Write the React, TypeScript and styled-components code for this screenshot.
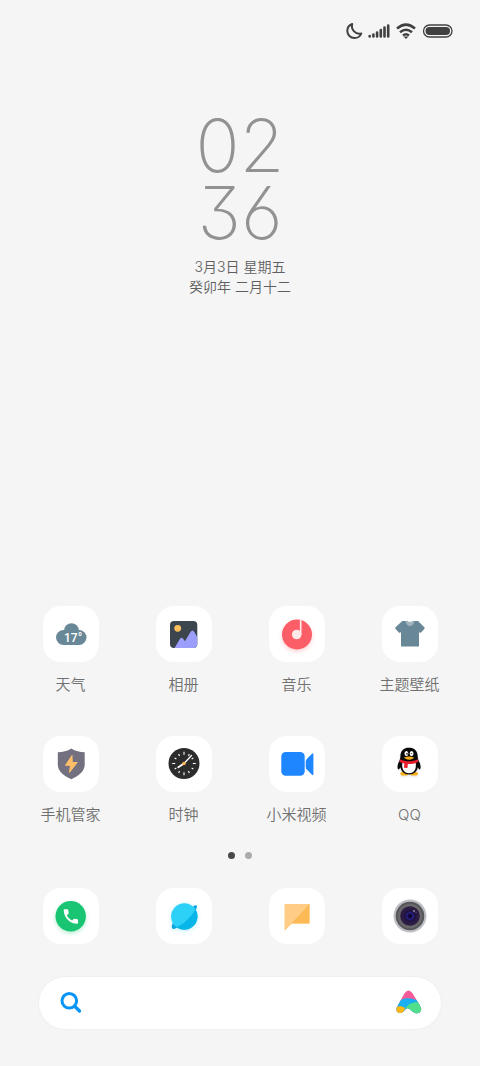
import React from 'react';
import styled, { createGlobalStyle } from 'styled-components';

const GlobalStyle = createGlobalStyle`
  * { box-sizing: border-box; }
  body {
    margin: 0;
    background: #f5f5f5;
    color: #707070;
    font-family: Inter, "Noto Sans CJK SC", sans-serif;
  }
  svg { display: block; }
`;

const Screen = styled.main`
  min-height: 100vh;
  display: flex;
  flex-direction: column;
  background: #f5f5f5;
`;

const StatusBar = styled.header`
  display: flex;
  justify-content: flex-end;
  align-items: center;
  height: 62px;
  gap: 5px;
  padding-right: 27px;
`;

const ClockWidget = styled.section`
  display: flex;
  flex-direction: column;
  align-items: center;
  padding-top: 50px;
`;

const Digits = styled.time`
  font-size: 73px;
  line-height: 67px;
  font-weight: 250;
  color: #929292;
  font-feature-settings: "cv09", "cv03";
  text-align: center;
`;

const DigitRow = styled.span`
  display: block;
`;

const DateLines = styled.p`
  margin: 11px 0 0;
  font-size: 14px;
  line-height: 20px;
  font-weight: 350;
  text-align: center;
  color: #606060;
`;

const DateLine = styled.span`
  display: block;
`;

const AppGrid = styled.nav`
  display: grid;
  grid-template-columns: repeat(4, 1fr);
  row-gap: 40px;
  margin-top: auto;
  padding: 0 14px;
`;

const AppButton = styled.button`
  display: flex;
  flex-direction: column;
  align-items: center;
  gap: 12px;
  padding: 0;
  border: 0;
  background: none;
  color: #707070;
  font: inherit;
  font-size: 15px;
  line-height: 22px;
  font-weight: 350;
  cursor: pointer;
`;

const Tile = styled.span`
  display: grid;
  place-items: center;
  width: 56px;
  height: 56px;
  border-radius: 18px;
  background: #fff;
`;

const Pager = styled.div`
  display: flex;
  justify-content: center;
  gap: 10px;
  margin: 26px 0 29px;
`;

const Dot = styled.span<{ $active?: boolean }>`
  width: 7px;
  height: 7px;
  border-radius: 50%;
  background: ${(p) => (p.$active ? '#484848' : '#ababab')};
`;

const Dock = styled.nav`
  display: grid;
  grid-template-columns: repeat(4, 1fr);
  padding: 0 14px;
`;

const SearchBar = styled.form`
  display: flex;
  align-items: center;
  height: 52px;
  margin: 33px 39px 37px;
  padding: 0 18px 0 21px;
  border-radius: 26px;
  background: #fff;
  box-shadow: 0 0 2px rgba(0, 0, 0, 0.08);
`;

const SearchInput = styled.input`
  flex: 1;
  min-width: 0;
  margin: 0 12px;
  border: 0;
  outline: 0;
  background: none;
  font: inherit;
  font-size: 15px;
`;

const IconButton = styled.button`
  padding: 0;
  border: 0;
  background: none;
  cursor: pointer;
`;

const Icon = ({ children }: { children: React.ReactNode }) => (
  <svg width="56" height="56" viewBox="0 0 56 56" aria-hidden="true">{children}</svg>
);

const Weather = () => (
  <Icon>
    <g fill="#688797">
      <circle cx="28.500" cy="24.500" r="7.300" />
      <rect x="13" y="24" width="30.500" height="15" rx="7.500" />
    </g>
    <text x="21" y="36" fontSize="12" fontWeight="500" fill="#fff" fontFamily="Roboto, sans-serif">17°</text>
  </Icon>
);

const Gallery = () => (
  <Icon>
    <clipPath id="photo"><rect x="14" y="15" width="27.300" height="27" rx="4" /></clipPath>
    <g clipPath="url(#photo)">
      <rect x="14" y="15" width="28" height="28" fill="#3c444d" />
      <circle cx="21.700" cy="22.300" r="3.400" fill="#ffbf5c" />
      <path d="M18 43L23.700 33.300Q25.500 30.500 27.300 33L29 35.300L34.300 26.300Q36.500 22.800 38.500 26.300L42 32.500V43z" fill="#9b9ffb" />
    </g>
  </Icon>
);

const Music = () => (
  <Icon>
    <circle cx="28" cy="28.500" r="15" fill="#fb5e66" filter="drop-shadow(0 2px 2px rgba(251,94,102,.3))" />
    <circle cx="27.700" cy="28.500" r="4.800" fill="#ffe9e8" />
    <path d="M31.700 13.500v15" stroke="#ffe9e8" strokeWidth="1.700" />
  </Icon>
);

const Themes = () => (
  <Icon>
    <path d="M20.500 15h4q3.500 2 7 0h4.500l6.300 6.300q.8.900 0 1.800l-3.200 3.300q-.7.700-1.600.2L37 26v14.500H19V26l-.6.600q-.9.500-1.600-.2l-3.200-3.300q-.8-.9 0-1.800L20 15.300z" fill="#688797" />
    <path d="M23.500 15c1 6.700 8 6.700 9 0q-4.500 2.200-9 0z" fill="#a2b5bf" />
  </Icon>
);

const Security = () => (
  <Icon>
    <path d="M28.300 12.500c4 2.900 8.500 3.300 13.400 3.800v12.500c0 7-7 11.700-13.400 14.500-6.500-2.800-13.500-7.500-13.500-14.500V16.300c5-.5 9.500-.9 13.500-3.800z" fill="#73717f" />
    <path d="M29 19.500l-6.500 9.800h5l-1 7 7.700-9.800h-5z" fill="#ffbf69" stroke="#ffbf69" strokeWidth="1" strokeLinejoin="round" />
  </Icon>
);

const ClockIcon = () => (
  <Icon>
    <circle cx="28" cy="27.500" r="15.500" fill="#2c2c2c" />
    {Array.from({ length: 12 }, (_, i) => (
      <path key={i} d={i % 3 ? 'M28 16.700v2' : 'M28 15.700v3'} stroke="#fff" strokeWidth="1.100" transform={`rotate(${i * 30} 28 27.500)`} />
    ))}
    <path d="M22.300 31.200l5.700-3.700" stroke="#fff" strokeWidth="1.900" strokeLinecap="round" />
    <path d="M28 27.500l7.500-8" stroke="#fff" strokeWidth="1.300" strokeLinecap="round" />
    <circle cx="28" cy="27.500" r="1.700" fill="#ffb54f" />
  </Icon>
);

const Video = () => (
  <Icon>
    <rect x="12.300" y="16" width="23.400" height="23.700" rx="4.500" fill="#1e87ff" />
    <path d="M36.700 26q0-2 1.300-3.300l5-5q1.400-1.300 1.400.6v20q0 1.700-1.400.5l-5-5q-1.300-1.200-1.300-3z" fill="#1e87ff" />
  </Icon>
);

const Penguin = () => (
  <Icon>
    <g transform="translate(-1 -2)">
      <g filter="drop-shadow(0 1px 1px rgba(0,0,0,.12))">
        <ellipse cx="23.300" cy="39.700" rx="4" ry="1.900" fill="#f8ad19" />
        <ellipse cx="33" cy="39.700" rx="4" ry="1.900" fill="#f8ad19" />
        <path d="M28 13.500c-5.300 0-8.600 3.700-8.600 9-.2 2-.5 3-1 4.200-1.500 2.500-2.600 6.800-1.300 8.600.7.500 1.700-.8 2.300-2 .8 4.500 4 7.200 8.700 7.200s7.900-2.700 8.700-7.200c.6 1.200 1.600 2.500 2.300 2 1.200-1.800.2-6.100-1.400-8.600-.5-1.200-.8-2.200-1-4.200 0-5.300-3.400-9-8.700-9z" fill="#080909" />
      </g>
      <path d="M21.400 28.500c-1 6.500 1.500 10.700 6.700 10.700s7.500-4.200 6.600-10.700z" fill="#fff" />
      <path d="M19.200 25.200c5.500 2.700 12 2.700 17.500 0l.8 2.600c-3.500 1.800-6.500 2.400-10.700 2.300l-.3 4-3.500-.3.300-4.300c-2-.4-3.600-1-5-1.700z" fill="#e91f2d" />
      <ellipse cx="25.400" cy="19.500" rx="1.900" ry="2.500" fill="#fff" />
      <ellipse cx="30.600" cy="19.500" rx="1.900" ry="2.500" fill="#fff" />
      <ellipse cx="26" cy="19.800" rx=".7" ry="1.100" />
      <path d="M29.700 20q.8-1.800 1.600 0" fill="none" stroke="#111" strokeWidth=".6" />
      <path d="M22.800 23.700q5.200-2.600 10.500 0-5 4-10.500 0z" fill="#f8ad19" />
    </g>
  </Icon>
);

const Phone = () => (
  <Icon>
    <circle cx="27.700" cy="28.300" r="15.200" fill="#19c472" filter="drop-shadow(0 2px 2px rgba(25,196,114,.3))" />
    <path d="M21.500 21.200h3q.6 0 .7.700l.5 3q.1.600-.4 1l-1.500 1.400c1.200 2.400 2.900 4.100 5.300 5.300l1.500-1.500q.4-.4 1-.3l2.700.5q.7.100.7.800v3q0 .7-.8.700C27 35.800 20.700 29.500 20.700 22q0-.8.800-.8z" fill="#fff" />
  </Icon>
);

const Browser = () => (
  <Icon>
    <g filter="drop-shadow(0 1px 2px rgba(20,190,240,.25))">
      <path d="M37 18.500l2.300-1.200q2-.4 1.700 1.500l-1.500 4zM16.700 35l-1 3.600q-.2 2.600 2.200 2.300l4-1.400z" fill="#0aa6df" />
      <circle cx="28.300" cy="28.500" r="13.200" fill="#2dd1f8" />
      <path d="M39.500 21.500A13.200 13.200 0 0 1 20.300 39C28 36 34 30 39.500 21.500z" fill="#08b5e9" />
    </g>
  </Icon>
);

const Notes = () => (
  <Icon>
    <path d="M15.500 17q0-1 1-1h24v19.500H23L16.500 42q-1 .8-1-.5z" fill="#ffcd85" />
    <path d="M40.500 16v19.500H22.500z" fill="#fcb955" />
  </Icon>
);

const Camera = () => (
  <Icon>
    <circle cx="28" cy="28" r="16.500" fill="#bfc1c6" />
    <circle cx="28" cy="28" r="14.300" fill="#57575a" />
    <circle cx="28" cy="28" r="12.300" fill="#69696b" />
    <circle cx="28" cy="28" r="9.800" fill="#2c1c42" />
    <circle cx="28" cy="28" r="6.300" fill="#211447" />
    <circle cx="28" cy="28" r="3.300" fill="#160d3e" stroke="#3029a7" strokeWidth="1" />
    <circle cx="28" cy="28" r="1.300" fill="#080632" />
    <circle cx="32" cy="23" r=".8" fill="#e5d7ee" />
    <circle cx="34" cy="24.500" r=".4" fill="#b59fc3" />
  </Icon>
);

const apps = [
  { name: '天气', Glyph: Weather },
  { name: '相册', Glyph: Gallery },
  { name: '音乐', Glyph: Music },
  { name: '主题壁纸', Glyph: Themes },
  { name: '手机管家', Glyph: Security },
  { name: '时钟', Glyph: ClockIcon },
  { name: '小米视频', Glyph: Video },
  { name: 'QQ', Glyph: Penguin },
];

const dockApps = [
  { name: '电话', Glyph: Phone },
  { name: '浏览器', Glyph: Browser },
  { name: '便签', Glyph: Notes },
  { name: '相机', Glyph: Camera },
];

const StatusIcons = () => (
  <>
    <svg width="17" height="18" viewBox="0 0 17 18" aria-label="勿扰">
      <path d="M6.200 2C3.300 3 1.300 5.700 1.300 9a7 7 0 0 0 7.200 7c3 0 5.700-1.700 6.800-4.500-5.700 1.400-10.600-3.800-9.100-9.500z" fill="none" stroke="#404040" strokeWidth="2" strokeLinejoin="round" />
    </svg>
    <svg width="22" height="16" viewBox="0 0 22 16" aria-label="信号">
      <path d="M1.700 13v.4M5.400 11.500v1.900M9.100 9.500v3.900M12.800 7v6.400M16.500 4.500v8.900M20.200 2.500v10.900" stroke="#404040" strokeWidth="2.600" strokeLinecap="round" />
    </svg>
    <svg width="22" height="18" viewBox="0 0 22 18" aria-label="无线网络">
      <path d="M2 6.500q9-7.800 18 0M5 10.200q6-5 12 0M8 13.400q3-2.400 6 0" fill="none" stroke="#404040" strokeWidth="2.500" strokeLinecap="butt" />
      <path d="M8.500 14.500h5L11 17z" fill="#404040" />
    </svg>
    <svg width="31" height="14" viewBox="0 0 31 14" aria-label="电量">
      <rect x="1.500" y="1" width="28.500" height="12" rx="6" fill="none" stroke="#404040" strokeWidth="1.300" />
      <rect x="3.500" y="3" width="24.500" height="8" rx="4" fill="#404040" />
    </svg>
  </>
);

export default function App() {
  return (
    <Screen>
      <GlobalStyle />
      <StatusBar><StatusIcons /></StatusBar>
      <ClockWidget>
        <Digits dateTime="02:36">
          <DigitRow>02</DigitRow>
          <DigitRow>36</DigitRow>
        </Digits>
        <DateLines>
          <DateLine>3月3日 星期五</DateLine>
          <DateLine>癸卯年 二月十二</DateLine>
        </DateLines>
      </ClockWidget>
      <AppGrid aria-label="应用">
        {apps.map(({ name, Glyph }) => (
          <AppButton key={name} type="button">
            <Tile><Glyph /></Tile>
            {name}
          </AppButton>
        ))}
      </AppGrid>
      <Pager><Dot $active /><Dot /></Pager>
      <Dock aria-label="常用应用">
        {dockApps.map(({ name, Glyph }) => (
          <AppButton key={name} type="button" aria-label={name}>
            <Tile><Glyph /></Tile>
          </AppButton>
        ))}
      </Dock>
      <SearchBar role="search">
        <svg width="22" height="22" viewBox="0 0 22 22" aria-hidden="true">
          <circle cx="9.300" cy="8.800" r="7.300" fill="none" stroke="#0895f6" strokeWidth="3" />
          <path d="M14.500 14l5 5" stroke="#0895f6" strokeWidth="3.300" strokeLinecap="round" />
        </svg>
        <SearchInput type="search" aria-label="搜索" />
        <IconButton type="button" aria-label="语音助手">
          <svg width="28" height="26" viewBox="0 0 28 26">
            <clipPath id="assist"><path d="M9.500 3.200Q13.500-2 17.500 3.200L25.500 16.500C28 21 24 24.500 20 23c-4-1.300-5-5.500-8.500-4.500-2.300 2-3.300 4.500-6.500 4.500-3 0-4.700-3-3-6z" /></clipPath>
            <g clipPath="url(#assist)">
              <path d="M0 0h28v26H0z" fill="#f65b9a" />
              <path d="M0 15C6 7 16 6.500 25 12v14H0z" fill="#18b0f2" />
              <path d="M0 17.500c4-2 7-1.500 10 .5L7 26H0z" fill="#fdb813" />
              <path d="M10.500 18.500C14 12 22 10.500 28 14v12H14z" fill="#50df8b" />
            </g>
          </svg>
        </IconButton>
      </SearchBar>
    </Screen>
  );
}
